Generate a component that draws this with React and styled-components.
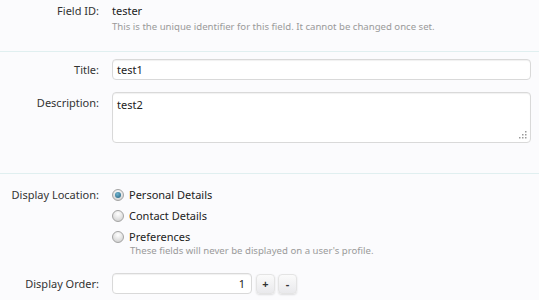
import React from "react";
import styled, { createGlobalStyle } from "styled-components";

const Global = createGlobalStyle`
  html, body { margin: 0; padding: 0; background: #fbfbfd; }
  body { font-family: "Noto Sans", "DejaVu Sans", sans-serif; font-size: 11px; color: #222; }
  * { box-sizing: border-box; }
`;

const Form = styled.div`
  width: 539px;
  height: 300px;
  overflow: hidden;
  background: #fbfbfd;
`;

const Section = styled.div`
  display: flex;
  flex-direction: column;
  padding: ${(p) => p.$pad || "0"};
  border-bottom: ${(p) => (p.$divider ? "1px solid #e0eff0" : "none")};
`;

const Row = styled.div`
  display: grid;
  grid-template-columns: 99px 1fr;
  column-gap: 13px;
  padding-right: 8px;
  align-items: ${(p) => (p.$top ? "start" : "center")};
  margin-top: ${(p) => p.$mt || 0}px;
`;

const Label = styled.div`
  text-align: right;
  color: #333;
  line-height: 16px;
  padding-top: ${(p) => p.$pt || 0}px;
  white-space: nowrap;
`;

const Value = styled.div`
  line-height: 16px;
  color: #222;
`;

const Hint = styled.div`
  font-size: 9.6px;
  line-height: 14px;
  color: #9a9a9a;
  padding-left: ${(p) => p.$indent || 0}px;
  margin-top: ${(p) => p.$mt || 0}px;
`;

const Input = styled.div`
  height: 21px;
  width: ${(p) => (p.$w ? `${p.$w}px` : "100%")};
  background: #fff;
  border: 1px solid #d9d9d9;
  border-radius: 4px;
  box-shadow: inset 0 1px 1px rgba(0, 0, 0, 0.06);
  padding: 0 6px 0 4px;
  line-height: 19px;
  color: #222;
  text-align: ${(p) => (p.$right ? "right" : "left")};
`;

const TextArea = styled(Input)`
  height: 51px;
  position: relative;
  padding-top: 2px;
`;

const Grip = styled.svg`
  position: absolute;
  right: 3px;
  bottom: 3px;
`;

const RadioList = styled.div`
  display: flex;
  flex-direction: column;
  gap: 5px;
`;

const RadioRow = styled.label`
  display: flex;
  align-items: center;
  height: 16px;
  line-height: 16px;
  color: #222;
`;

const RadioCircle = styled.span`
  width: 12px;
  height: 12px;
  border-radius: 50%;
  border: 1px solid #a3a3a3;
  background: radial-gradient(circle at 50% 30%, #ffffff 0%, #e2e2e2 55%, #c8c8c8 100%);
  margin-right: 5px;
  position: relative;
  flex: none;
  &::after {
    content: "";
    display: ${(p) => (p.$checked ? "block" : "none")};
    position: absolute;
    left: 2px;
    top: 2px;
    width: 6px;
    height: 6px;
    border-radius: 50%;
    background: radial-gradient(circle at 40% 35%, #6fb3cf 0%, #2f6f8c 80%);
  }
`;

const Controls = styled.div`
  display: flex;
  align-items: center;
  gap: 3px;
`;

const SpinButton = styled.button`
  width: 19px;
  height: 20px;
  margin-left: ${(p) => p.$ml || 0}px;
  padding: 0;
  border: 1px solid #e4e4e4;
  border-radius: 4px;
  background: linear-gradient(#fbfbfb, #e9e9ec);
  box-shadow: 0 1px 2px rgba(0, 0, 0, 0.12);
  font-family: "Noto Sans", "DejaVu Sans", sans-serif;
  font-size: 11px;
  font-weight: bold;
  color: #333;
  line-height: 18px;
`;

export default function App() {
  return (
    <Form>
      <Global />
      <Section $pad="3px 0 17px 0" $divider>
        <Row $top>
          <Label>Field ID:</Label>
          <div>
            <Value>tester</Value>
            <Hint $mt={1}>This is the unique identifier for this field. It cannot be changed once set.</Hint>
          </div>
        </Row>
      </Section>
      <Section $pad="7px 0 30px 0" $divider>
        <Row>
          <Label>Title:</Label>
          <Input>test1</Input>
        </Row>
        <Row $top $mt={12}>
          <Label $pt={3}>Description:</Label>
          <TextArea>
            test2
            <Grip width="9" height="9" viewBox="0 0 9 9">
              {[
                [7, 1],
                [7, 4],
                [4, 4],
                [7, 7],
                [4, 7],
                [1, 7],
              ].map(([x, y], i) => (
                <rect key={i} x={x} y={y} width="1.5" height="1.5" fill="#9a9a9a" />
              ))}
            </Grip>
          </TextArea>
        </Row>
      </Section>
      <Section $pad="13px 0 0 0">
        <Row $top>
          <Label>Display Location:</Label>
          <div>
            <RadioList>
              <RadioRow>
                <RadioCircle $checked />
                Personal Details
              </RadioRow>
              <RadioRow>
                <RadioCircle />
                Contact Details
              </RadioRow>
              <RadioRow>
                <RadioCircle />
                Preferences
              </RadioRow>
            </RadioList>
            <Hint $indent={18} $mt={-1}>These fields will never be displayed on a user's profile.</Hint>
          </div>
        </Row>
        <Row $mt={15}>
          <Label>Display Order:</Label>
          <Controls>
            <Input $w={140} $right>1</Input>
            <SpinButton $ml={1}>+</SpinButton>
            <SpinButton>-</SpinButton>
          </Controls>
        </Row>
      </Section>
    </Form>
  );
}
